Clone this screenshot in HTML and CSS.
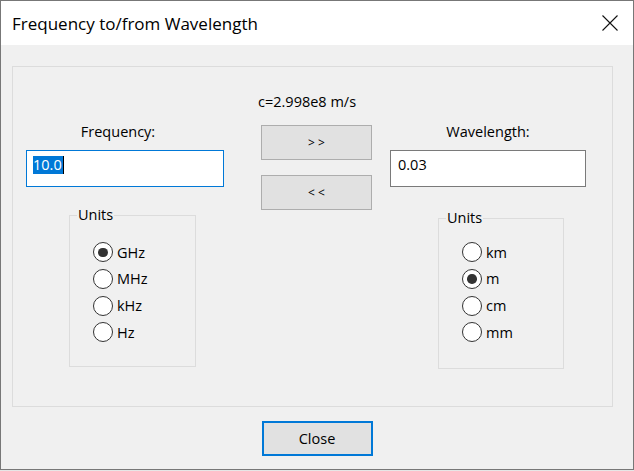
FILE: index.html
```html
<!DOCTYPE html>
<html lang="en">
<head>
    <meta charset="UTF-8">
    <meta name="viewport" content="width=device-width, initial-scale=1.0">
    <title>Frequency to/from Wavelength</title>
    <link rel="stylesheet" href="styles.css">
</head>
<body>

<div class="window">
    <div class="titlebar">
        <span class="title">Frequency to/from Wavelength</span>
        <svg class="close-x" width="16" height="16" viewBox="0 0 16 16">
            <path d="M0.5 0.5 L15.5 15.5 M15.5 0.5 L0.5 15.5" stroke="#111" stroke-width="1.1" fill="none"/>
        </svg>
    </div>
    <div class="client">
        <div class="panel">
            <div class="col col-freq">
                <div class="field-label">Frequency:</div>
                <div class="textbox focused"><span class="sel">10.0</span><span class="caret"></span></div>
                <fieldset class="units units-freq">
                    <legend>Units</legend>
                    <div class="radio checked"><span class="circle"></span>GHz</div>
                    <div class="radio"><span class="circle"></span>MHz</div>
                    <div class="radio"><span class="circle"></span>kHz</div>
                    <div class="radio"><span class="circle"></span>Hz</div>
                </fieldset>
            </div>
            <div class="col col-mid">
                <div class="speed">c=2.998e8 m/s</div>
                <button class="btn arrow-btn">&gt; &gt;</button>
                <button class="btn arrow-btn">&lt; &lt;</button>
            </div>
            <div class="col col-wave">
                <div class="field-label">Wavelength:</div>
                <div class="textbox">0.03</div>
                <fieldset class="units units-wave">
                    <legend>Units</legend>
                    <div class="radio"><span class="circle"></span>km</div>
                    <div class="radio checked"><span class="circle"></span>m</div>
                    <div class="radio"><span class="circle"></span>cm</div>
                    <div class="radio"><span class="circle"></span>mm</div>
                </fieldset>
            </div>
        </div>
        <div class="footer">
            <button class="btn close-btn">Close</button>
        </div>
    </div>
</div>

</body>
</html>
```

FILE: styles.css
```css
html, body {
    margin: 0;
    padding: 0;
    overflow: hidden;
}
body {
    font-family: "Open Sans", "Noto Sans", sans-serif;
    font-size: 14.5px;
    color: #000;
    background: #e6e6e6;
}
.window {
    width: 634px;
    height: 470px;
    box-sizing: border-box;
    border: 1px solid #777;
    display: flex;
    flex-direction: column;
}
.titlebar {
    height: 44px;
    flex: none;
    background: #fff;
    display: flex;
    align-items: center;
    justify-content: space-between;
    padding: 0 15px 0 11px;
}
.title {
    font-size: 17px;
}
.close-x {
    display: block;
    margin-top: -1px;
}
.client {
    flex: 1;
    background: #f0f0f0;
    padding-top: 21px;
}
.panel {
    width: 601px;
    height: 341px;
    margin-left: 11px;
    box-sizing: border-box;
    border: 1px solid #dcdcdc;
    display: flex;
    align-items: flex-start;
}
.col {
    display: flex;
    flex-direction: column;
}
.col-freq {
    width: 198px;
    margin-left: 13px;
    padding-top: 55px;
}
.col-mid {
    width: 111px;
    margin-left: 37px;
    padding-top: 25px;
}
.col-wave {
    width: 196px;
    margin-left: 18px;
    padding-top: 55px;
}
.field-label {
    line-height: 20px;
    text-align: center;
}
.col-freq .field-label {
    padding-right: 14px;
}
.textbox {
    margin-top: 8px;
    height: 37px;
    box-sizing: border-box;
    border: 1px solid #7a7a7a;
    background: #fff;
    padding: 4px 7px;
    line-height: 20px;
    display: flex;
    align-items: center;
    align-items: flex-start;
}
.textbox.focused {
    border-color: #0078d7;
    padding-left: 6px;
    padding-top: 5px;
}
.sel {
    background: #0078d7;
    color: #fff;
    line-height: 18px;
    padding-right: 1px;
}
.caret {
    width: 1px;
    height: 18px;
    background: #000;
}
.speed {
    line-height: 20px;
    margin-left: -3px;
    white-space: nowrap;
}
.btn {
    font-family: inherit;
    background: #e1e1e1;
    border: 1px solid #adadad;
    padding: 0;
    color: #000;
    cursor: pointer;
}
.arrow-btn {
    height: 35px;
    font-size: 12px;
}
.arrow-btn:first-of-type {
    margin-top: 13px;
}
.arrow-btn + .arrow-btn {
    margin-top: 15px;
}
.units {
    margin: 0;
    padding: 14px 0 0 0;
    border: 1px solid #dcdcdc;
    box-sizing: border-box;
}
.units legend {
    line-height: 20px;
    padding: 0 1px;
    margin-left: 7px;
}
.units-freq {
    width: 127px;
    height: 162px;
    margin: 18px 0 0 43px;
}
.units-wave {
    width: 126px;
    height: 161px;
    margin: 21px 0 0 48px;
    padding-top: 11px;
}
.radio {
    height: 26.67px;
    margin-left: 23px;
    display: flex;
    align-items: center;
    gap: 4px;
}
.circle {
    width: 20px;
    height: 20px;
    box-sizing: border-box;
    border: 1.3px solid #333;
    border-radius: 50%;
    background: #fff;
    display: flex;
    align-items: center;
    justify-content: center;
}
.radio.checked .circle::after {
    content: "";
    width: 9.5px;
    height: 9.5px;
    border-radius: 50%;
    background: #333;
}
.footer {
    display: flex;
    justify-content: center;
    padding-top: 14px;
}
.close-btn {
    width: 111px;
    height: 35px;
    border: 2px solid #0078d7;
    font-size: 14.5px;
}
```
